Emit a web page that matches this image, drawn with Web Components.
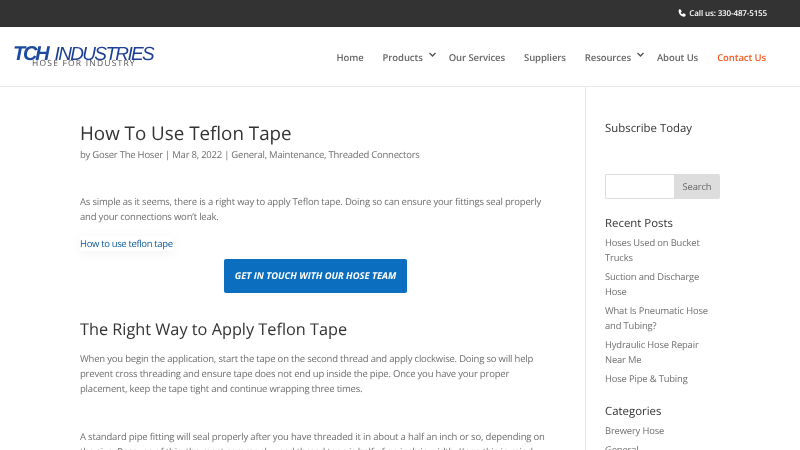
<!DOCTYPE html>
<html lang="en"><head><meta charset="utf-8"><title>How To Use Teflon Tape</title>
<style>
html,body{margin:0;padding:0;height:450px;overflow:hidden;background:#fff}
body{font-family:"Open Sans",sans-serif;color:#666;display:block;text-rendering:geometricPrecision;filter:blur(.35px)}
</style></head><body>
<tch-topbar></tch-topbar>
<tch-header></tch-header>
<tch-layout>
  <tch-article></tch-article>
  <tch-sidebar slot="side"></tch-sidebar>
</tch-layout>
<script>
const def=(n,h)=>customElements.define(n,class extends HTMLElement{constructor(){super();this.attachShadow({mode:'open'}).innerHTML=h}});
def('tch-topbar',`<style>:host{display:flex;height:27px;background:#333;color:#fff;justify-content:flex-end;align-items:center;padding-right:33px;font-size:8px;letter-spacing:-.13px;font-weight:600;box-sizing:border-box;gap:3px;padding-bottom:1px}
svg{width:8px;height:8px;fill:#fff}</style>
<svg viewBox="0 0 24 24"><path d="M5 1 9 2 11 8 8 11c1 2 3 4 5 5l3-3 6 2 1 4c0 2-2 4-5 4C9 23 1 13 2 6c0-3 1-5 3-5z"/></svg><span>Call us: 330-487-5155</span>`);
def('tch-logo',`<style>:host{display:block;width:142px;height:28px;line-height:1}
.top{display:flex;align-items:baseline;font-style:italic;height:19px;font-family:"Liberation Sans",sans-serif}
b{font-size:20px;letter-spacing:-2.2px;font-weight:700;color:#1c4aa0;margin-right:7px}
span{font-size:19px;letter-spacing:-1.65px;color:#1c3e94}
i{display:block;font-style:normal;font-family:"Open Sans",sans-serif;font-size:8.5px;letter-spacing:1.2px;color:#555;margin:-3px 0 0 19px;white-space:nowrap}</style>
<div class="top"><b>TCH</b><span>INDUSTRIES</span></div><i>HOSE FOR INDUSTRY</i>`);
def('tch-header',`<style>:host{display:flex;height:60px;box-sizing:border-box;border-bottom:1px solid #e8e8e8;padding:0 34px 0 13px;justify-content:space-between;align-items:center}
nav{display:flex;align-items:center;margin-top:1px;font-size:9.5px;letter-spacing:-.09px;font-weight:600;color:#666;white-space:nowrap}
a{display:block}a.c{color:#f4581f}
.has{display:flex;align-items:flex-start}
.has svg{width:7px;height:5px;fill:none;stroke:#555;stroke-width:1.4;margin:1px 0 0 6px}
tch-logo{margin-top:2px}</style>
<tch-logo></tch-logo>
<nav>
<a style="margin-right:19px">Home</a>
<a class="has" style="margin-right:13px">Products<svg viewBox="0 0 7 5"><path d="M.5 1 3.500 4 6.500 1"/></svg></a>
<a style="margin-right:19px">Our Services</a>
<a style="margin-right:19px">Suppliers</a>
<a class="has" style="margin-right:13px">Resources<svg viewBox="0 0 7 5"><path d="M.5 1 3.500 4 6.500 1"/></svg></a>
<a style="margin-right:19px">About Us</a>
<a class="c">Contact Us</a>
</nav>`);
def('tch-layout',`<style>:host{display:grid;grid-template-columns:585px 215px;height:363px;overflow:hidden}
.m{padding-left:80px;box-sizing:border-box}
.s{border-left:1px solid #e8e8e8;padding-left:19px;box-sizing:border-box}</style>
<div class="m"><slot></slot></div><div class="s"><slot name="side"></slot></div>`);
def('tch-article',`<style>:host{display:block;width:467px;font-size:9.5px;letter-spacing:-.2px;line-height:15px;color:#6e6e6e;padding-top:33px}
h1{font-size:18.8px;letter-spacing:0;font-weight:400;color:#333;margin:0;line-height:26px}
h2{font-size:16.3px;letter-spacing:0;font-weight:400;color:#333;margin:0;line-height:22px}
p{margin:0;white-space:nowrap}
.meta{margin-top:1px;letter-spacing:-.24px}
.w{letter-spacing:-.175px}
.l{color:#0c5a9e;letter-spacing:-.35px;display:inline-block;box-shadow:0 2px 12px rgba(0,0,0,.05);background:rgba(255,255,255,.6)}
.b{display:flex;justify-content:center;margin:8px 0 0 4px}
.b a{display:block;width:183px;height:34px;line-height:34px;background:#0c6ebf;border-radius:2px;color:#fff;font-weight:700;font-style:italic;text-align:center;font-size:9.4px;letter-spacing:0;white-space:nowrap}</style>
<h1>How To Use Teflon Tape</h1>
<p class="meta">by Goser The Hoser | Mar 8, 2022 | General, Maintenance, Threaded Connectors</p>
<p style="margin-top:32px">As simple as it seems, there is a right way to apply Teflon tape. Doing so can ensure your fittings seal properly</p>
<p>and your connections won’t leak.</p>
<p style="margin-top:12px"><a class="l">How to use teflon tape</a></p>
<div class="b"><a>GET IN TOUCH WITH OUR HOSE TEAM</a></div>
<h2 style="margin-top:25px">The Right Way to Apply Teflon Tape</h2>
<p style="margin-top:11px">When you begin the application, start the tape on the second thread and apply clockwise. Doing so will help</p>
<p>prevent cross threading and ensure tape does not end up inside the pipe. Once you have your proper</p>
<p>placement, keep the tape tight and continue wrapping three times.</p>
<p class="w" style="margin-top:33px">A standard pipe fitting will seal properly after you have threaded it in about a half an inch or so, depending on</p>
<p class="w">the size. Because of this, the most commonly used thread tape is half of an inch in width. Keep this in mind</p>`);
def('tch-sidebar',`<style>:host{display:block;width:115px;font-size:9.4px;letter-spacing:-.15px;line-height:15px;color:#6e6e6e;padding-top:34px}
h4{font-size:11.4px;letter-spacing:0;font-weight:400;color:#333;margin:0;line-height:16px;white-space:nowrap}
form{display:flex;height:25px;margin-top:37px}
.i{flex:1;border:1px solid #ddd;border-right:0;border-radius:2px 0 0 2px;background:#fff}
.s{width:46px;background:#ddd;color:#666;text-align:center;line-height:26px;border-radius:0 2px 2px 0}
ul{list-style:none;margin:3px 0 0;padding:0;width:110px}
li{margin-bottom:4px}</style>
<h4>Subscribe Today</h4>
<form><div class="i"></div><div class="s">Search</div></form>
<h4 style="margin-top:17px">Recent Posts</h4>
<ul>
<li>Hoses Used on Bucket Trucks</li>
<li>Suction and Discharge Hose</li>
<li>What Is Pneumatic Hose and Tubing?</li>
<li>Hydraulic Hose Repair Near Me</li>
<li>Hose Pipe &amp; Tubing</li>
</ul>
<h4 style="margin-top:18px">Categories</h4>
<ul><li>Brewery Hose</li><li>General</li></ul>`);
</script>
</body></html>
